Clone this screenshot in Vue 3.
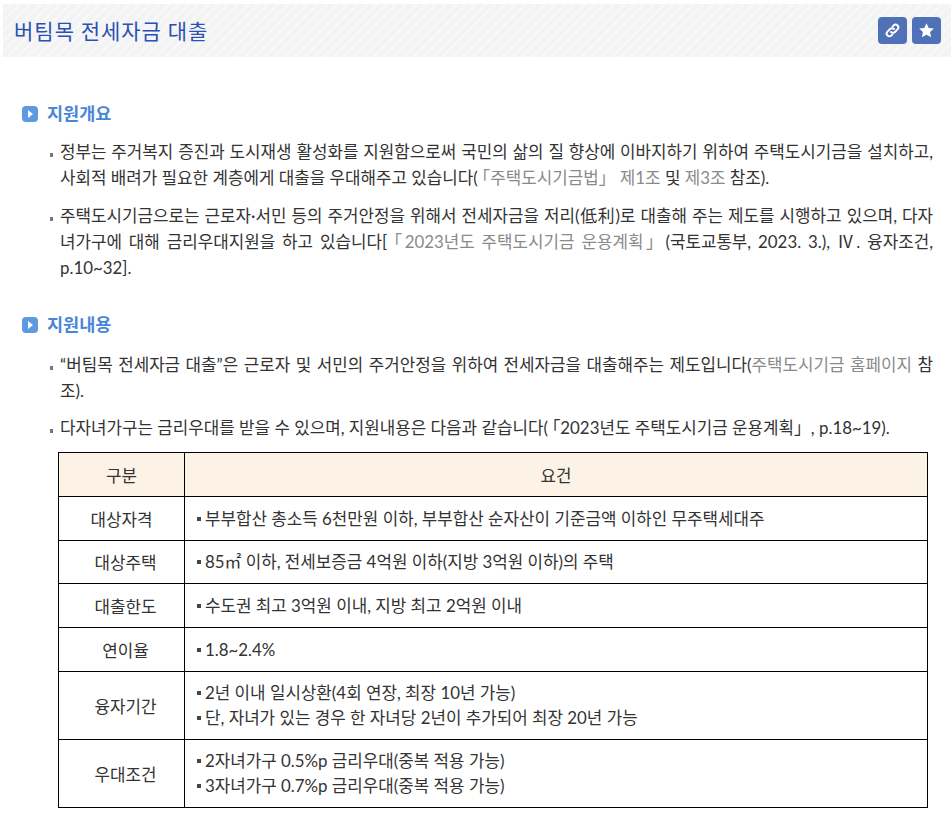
<script setup>
const rows = [
  { head: '대상자격', lines: ['부부합산 총소득 6천만원 이하, 부부합산 순자산이 기준금액 이하인 무주택세대주'] },
  { head: '대상주택', lines: ['85㎡ 이하, 전세보증금 4억원 이하(지방 3억원 이하)의 주택'] },
  { head: '대출한도', lines: ['수도권 최고 3억원 이내, 지방 최고 2억원 이내'] },
  { head: '연이율', lines: ['1.8~2.4%'] },
  { head: '융자기간', lines: ['2년 이내 일시상환(4회 연장, 최장 10년 가능)', '단, 자녀가 있는 경우 한 자녀당 2년이 추가되어 최장 20년 가능'] },
  { head: '우대조건', lines: ['2자녀가구 0.5%p 금리우대(중복 적용 가능)', '3자녀가구 0.7%p 금리우대(중복 적용 가능)'] },
]
</script>

<template>
  <div class="page">
    <header class="top">
      <h1 class="title">버팀목 전세자금 대출</h1>
      <div class="actions">
        <button class="act" aria-label="링크">
          <svg viewBox="0 0 16 16" width="17" height="17" fill="none" stroke="#fff" stroke-width="1.8" stroke-linecap="round">
            <path d="M6.600 9.400a2.600 2.600 0 0 0 3.700 0l2.400-2.400a2.600 2.600 0 0 0-3.700-3.700L8 4.300" />
            <path d="M9.400 6.600a2.600 2.600 0 0 0-3.700 0L3.300 9a2.600 2.600 0 0 0 3.700 3.700L8 11.700" />
          </svg>
        </button>
        <button class="act" aria-label="즐겨찾기">
          <svg viewBox="0 0 16 16" width="17" height="17" fill="#fff">
            <path d="M8 1.200l2.100 4.400 4.800.6-3.500 3.300.9 4.800L8 12l-4.300 2.300.9-4.800L1.100 6.200l4.800-.6z" />
          </svg>
        </button>
      </div>
    </header>

    <section class="sec first">
      <h2 class="sub"><span class="mark"></span>지원개요</h2>
      <p class="item">정부는 주거복지 증진과 도시재생 활성화를 지원함으로써 국민의 삶의 질 향상에 이바지하기 위하여 주택도시기금을 설치하고, 사회적 배려가 필요한 계층에게 대출을 우대해주고 있습니다(<span class="ref open">「주택도시기금법」 제1조</span> 및 <span class="ref">제3조</span> 참조).</p>
      <p class="item">주택도시기금으로는 근로자·서민 등의 주거안정을 위해서 전세자금을 저리(低利)로 대출해 주는 제도를 시행하고 있으며, 다자녀가구에 대해 금리우대지원을 하고 있습니다[<span class="ref open">「2023년도 주택도시기금 운용계획」</span>(국토교통부, 2023. 3.), Ⅳ. 융자조건, p.10~32].</p>
    </section>

    <section class="sec second">
      <h2 class="sub"><span class="mark"></span>지원내용</h2>
      <p class="item">“버팀목 전세자금 대출”은 근로자 및 서민의 주거안정을 위하여 전세자금을 대출해주는 제도입니다(<span class="ref">주택도시기금 홈페이지</span> 참조).</p>
      <p class="item">다자녀가구는 금리우대를 받을 수 있으며, 지원내용은 다음과 같습니다(<span class="open">「2023년도 주택도시기금 운용계획」</span>, p.18~19).</p>
    </section>

    <table class="grid">
      <thead>
        <tr><th class="c1">구분</th><th>요건</th></tr>
      </thead>
      <tbody>
        <tr v-for="r in rows" :key="r.head">
          <td class="c1">{{ r.head }}</td>
          <td class="body">
            <div v-for="l in r.lines" :key="l" class="ln">{{ l }}</div>
          </td>
        </tr>
      </tbody>
    </table>
  </div>
</template>

<style>
html, body { margin: 0; background: #fff; }
</style>

<style scoped>
.page {
  width: 951px;
  height: 819px;
  overflow: hidden;
  box-sizing: border-box;
  padding-top: 4px;
  font-family: "Lato", "Noto Sans CJK KR", "Noto Sans", sans-serif;
  color: #333;
  font-size: 16.85px;
}
.top {
  margin-left: 3px;
  height: 53px;
  display: flex;
  align-items: center;
  justify-content: space-between;
  padding: 0 10px 0 11px;
  background: repeating-linear-gradient(135deg, #f3f3f3 0 4px, #f7f7f7 4px 7px);
}
.title {
  margin: 0;
  font-family: "Noto Sans CJK KR", sans-serif;
  font-size: 21px;
  font-weight: 400;
  color: #2b50b4;
  letter-spacing: 1px;
  line-height: 1.3;
}
.actions { display: flex; gap: 5px; margin-top: -1px; }
.act {
  width: 29px;
  height: 27px;
  padding: 0;
  border: 0;
  border-radius: 4px;
  background: #4f71b8;
  display: flex;
  align-items: center;
  justify-content: center;
}
.sec { margin-left: 22px; width: 911px; }
.first { margin-top: 45px; }
.second { margin-top: 32px; }
.sub {
  display: flex;
  align-items: center;
  gap: 9px;
  margin: 0 0 13px;
  font-size: 17.5px;
  font-weight: 700;
  color: #4a86d8;
  line-height: 24px;
}
.second .sub { margin-bottom: 15px; }
.mark {
  width: 16px;
  height: 16px;
  border-radius: 4px;
  background: #5e9ae0;
  position: relative;
}
.mark::after {
  content: "";
  position: absolute;
  left: 6px;
  top: 4px;
  border-left: 5px solid #fff;
  border-top: 4px solid transparent;
  border-bottom: 4px solid transparent;
}
.item {
  position: relative;
  margin: 0 0 12px;
  padding-left: 38px;
  line-height: 26px;
  text-align: justify;
}
.second .item { margin-bottom: 11px; }
.item::before {
  content: "";
  position: absolute;
  left: 28px;
  top: 14px;
  width: 3px;
  height: 4px;
  background: #777;
}
.ref { color: #8a8a8a; }
.open { margin-left: 4px; }
.grid {
  margin: 0 0 0 58px;
  width: 870px;
  border-collapse: collapse;
  table-layout: fixed;
}
.grid th, .grid td {
  border: 1px solid #000;
  font-weight: 400;
  text-align: center;
  height: 43.8px;
  padding: 0;
  box-sizing: border-box;
}
.grid th { background: #fcf3e6; }
.grid .c1 { width: 126px; }
.grid tbody tr + tr .c1 { padding-left: 8px; }
.grid .body { text-align: left; padding: 8.5px 12px; }
.ln { position: relative; padding-left: 8px; line-height: 25px; }
.ln::before {
  content: "";
  position: absolute;
  left: 0;
  top: 11px;
  width: 4px;
  height: 4px;
  background: #444;
}
</style>
